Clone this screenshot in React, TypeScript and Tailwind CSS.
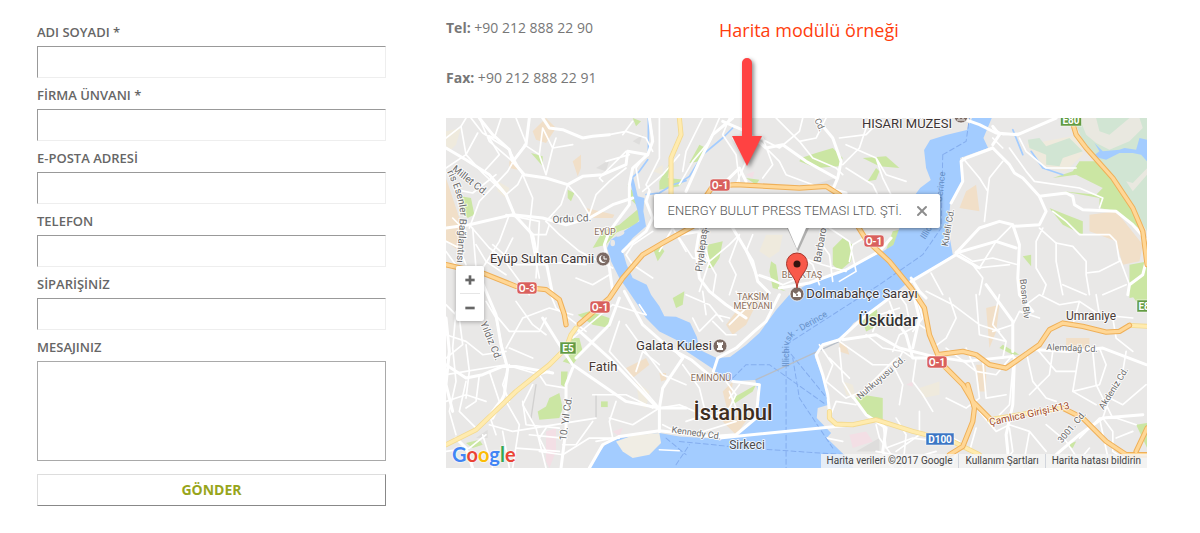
import { Minus, Plus, X } from 'lucide-react';
import type { ReactNode } from 'react';

const fields = [
  { id: 'name', label: 'ADI SOYADI *', type: 'text' },
  { id: 'company', label: 'FİRMA ÜNVANI *', type: 'text' },
  { id: 'email', label: 'E-POSTA ADRESİ', type: 'email' },
  { id: 'phone', label: 'TELEFON', type: 'tel' },
  { id: 'order', label: 'SİPARİŞİNİZ', type: 'text' },
];

const googleLetters = [
  ['G', '#4285f4'],
  ['o', '#ea4335'],
  ['o', '#fbbc05'],
  ['g', '#4285f4'],
  ['l', '#34a853'],
  ['e', '#ea4335'],
];

interface LabelProps {
  x: number;
  y: number;
  size?: number;
  rotate?: number;
  color?: string;
  bold?: boolean;
  children: ReactNode;
}

function MapLabel({ x, y, size = 10, rotate = 0, color = '#6b6b6b', bold, children }: LabelProps) {
  return (
    <text
      transform={`translate(${x} ${y}) rotate(${rotate})`}
      fontSize={size}
      fontWeight={bold ? 500 : 400}
      fill={color}
      stroke="#fff"
      strokeWidth={2}
      strokeOpacity={0.8}
      strokeLinejoin="round"
      textAnchor="middle"
      className="[paint-order:stroke]"
    >
      {children}
    </text>
  );
}

function Shield({ x, y, w, color, children }: { x: number; y: number; w: number; color: string; children: ReactNode }) {
  return (
    <g>
      <rect x={x - w / 2} y={y - 6} width={w} height={12} rx={color === '#d9605d' ? 3 : 0} fill={color} stroke="#fff" strokeOpacity={0.5} />
      <text x={x} y={y + 4} fontSize={10} fontWeight={700} fill="#fff" textAnchor="middle">{children}</text>
    </g>
  );
}

function Poi({ x, y, children }: { x: number; y: number; children: ReactNode }) {
  return (
    <g transform={`translate(${x} ${y})`}>
      <circle r={7} fill="#7b6a63" stroke="#fff" strokeOpacity={0.7} />
      {children}
    </g>
  );
}

// Small streets, drawn on a grid three times finer than the labels
const streets = [
  // north west
  'M60 0L45 25L0 60M75 0L110 45L190 95L205 125M100 0L130 70L200 130M165 0L145 60L110 45M210 0L240 75L205 125',
  'M205 125L185 160L100 250L70 330M95 45L60 110L0 150M45 25L60 110L110 165M130 60L160 110L110 165L180 230M150 170L80 225L30 215',
  'M235 80L280 110L300 170M290 30L280 110M320 90L300 170M380 80L320 90L290 30M330 60L320 90M205 125L230 170L215 200L180 230',
  'M230 170L260 240L250 330L280 480M365 200L345 260L300 310M365 200L400 240L430 290L420 310M430 290L450 230L490 190L540 150',
  'M300 310L340 350L400 400L500 450M70 320L130 390L170 420L250 530M190 290L160 370L110 450M180 290L280 310L270 480',
  'M90 380L120 430L180 470M80 330L90 450L110 470M200 360L170 420M140 380L210 440L300 440M310 320L300 350L260 350',
  'M490 50L540 40L600 60M530 50L560 10M600 60L620 100M610 0L620 60M640 0L640 120L600 200L610 215M700 110L650 170L590 220',
  'M540 100L460 180L470 190M550 110L480 130M600 110L570 150L580 210M620 340L560 380L540 410L560 440L620 480',
  'M0 370L40 390L60 440M0 400L50 470M20 300L60 340M390 480L440 500L490 470M260 430L420 440',
  // centre north
  'M820 0L790 70L740 130L700 200M850 0L830 50L870 110L880 190M860 60L900 130L870 200M770 0L720 100L710 160',
  'M960 90L1000 130L1020 170L1100 200M940 60L1000 90L1060 40L1070 0M950 60L980 140L950 180M990 0L1060 70L1110 60L1140 0M1060 70L1100 120L1170 150L1190 170',
  'M1190 140L1240 90L1270 0M1200 80L1290 120L1310 180L1340 240M1180 60L1260 50L1290 20M1290 120L1320 170L1380 190M1200 150L1280 200L1300 240',
  'M700 360L740 420L790 430L760 520M760 330L790 430L850 380L880 350M770 400L810 470L800 530M880 350L850 430L870 470L850 530',
  'M920 350L900 400L930 470L1010 500M1070 420L1130 440L1200 460M1120 370L1150 410L1160 490M1150 330L1210 370L1230 460L1180 490M1270 350L1220 380L1210 430',
  'M940 470L970 480L1010 500L1060 480M1060 410L1100 440L1120 500M700 290L680 330L720 400M620 300L680 330L640 400',
  // north east
  'M1550 120L1600 180L1625 220L1615 310M1670 130L1630 180L1625 220M1690 90L1740 160L1765 190L1900 210L1970 240L1960 270M1720 60L1740 100L1800 150L1890 150',
  'M1530 400L1580 430L1640 420L1715 440M1580 440L1610 480L1600 530M1455 465L1490 530M1790 330L1770 370L1770 450L1800 500L1790 530M1780 330L1830 375L1830 430L1850 530',
  'M1830 375L1880 385L1920 430L1920 470L1930 530M1920 465L1960 460L2020 430L2010 370L1990 350L1900 350L1860 310L1820 280M1970 530L2040 500M2020 420L2050 500',
  'M1700 320L1650 370L1600 450M1640 30L1670 50L1730 45M1640 60L1670 90M1590 450L1690 440M1850 500L1920 530',
  // south west
  'M0 560L40 600L50 680L0 720M0 650L60 670L110 710L180 700M120 550L150 600L180 740M30 580L20 690L30 790L10 880L30 950M0 770L180 740L280 770L310 760',
  'M60 790L40 880L90 930M100 770L90 850L60 870M130 760L160 850L130 890L150 950M180 690L230 600L310 570L380 590M210 550L260 620L300 650',
  'M140 580L190 640L280 640L300 600M180 850L220 920L200 1050M260 800L230 860L270 930L300 1050M130 920L200 940L450 900M110 950L140 1050M170 940L190 1050',
  'M280 770L300 800L360 810M0 1000L70 990L120 950M230 850L240 920L340 930M300 930L280 960L300 1000M440 910L390 980L350 980M440 830L540 830L620 870',
  'M380 660L500 560L600 590M520 610L490 700L580 800L640 870M540 620L590 690L650 770L720 800M510 850L490 910L500 960L450 970M640 870L560 920L490 900',
  'M640 870L700 860M650 920L710 950M570 760L590 700L640 740M280 1000L350 1010L430 960L520 960M210 990L340 1000M250 950L350 960',
  'M310 520L330 570L420 640M600 590L580 560M0 850L60 830L120 850M60 680L70 760L60 840M190 740L170 800L190 850M260 720L190 690',
  // centre south
  'M740 600L760 640L810 590L850 600M720 530L790 560L830 610M850 620L900 570L930 520M800 610L840 650L870 650M900 570L870 520M770 520L780 590',
  'M840 790L870 830L850 870L780 900M880 800L850 840M850 820L870 870M710 740L760 810L780 890L720 910M700 860L770 890L840 900M740 950L870 910',
  'M1120 680L1160 740L1140 790L1200 840M1180 670L1280 740L1350 740L1370 700M1180 690L1190 790L1220 840M1150 720L1210 780M1200 840L1250 820L1350 720',
  'M1230 860L1170 850L1150 900M1290 920L1300 960L1350 1030M1310 910L1320 990L1400 960L1480 970M1260 650L1310 690L1370 700L1400 720M1280 640L1300 590L1360 570',
  'M1340 740L1370 800L1360 860M1410 720L1400 790L1430 830L1460 880M1350 900L1380 950L1370 1050M1420 880L1420 950L1350 1000M1290 1000L1400 1020L1470 1000',
  'M1340 700L1360 650L1420 620L1450 640M1330 550L1360 630M1390 610L1380 560L1350 520',
  // south east
  'M1410 530L1430 600L1400 640M1510 540L1530 600L1500 660L1460 690M1440 520L1520 560L1600 620L1660 640M1590 530L1600 650L1680 670M1660 530L1640 620L1680 670L1670 720',
  'M1500 690L1540 720L1590 760L1650 770L1700 710M1560 690L1590 760L1600 840L1560 870L1500 840M1610 730L1620 840L1680 830M1700 750L1690 860L1660 890',
  'M1740 700L1760 790L1800 840L1830 850M1770 690L1830 760L1890 760L1900 700M1890 760L1880 820L1950 860M1820 700L1810 770L1750 830M1750 830L1790 790',
  'M1880 820L1960 800L1980 740L1960 690M1940 700L1950 800L2000 900M2040 700L2030 760L1990 840L1970 900M2100 800L2030 860L1990 840',
  'M1740 560L1780 530L1840 560L1900 550L1960 590L2060 600M1900 550L1880 620M1960 590L1950 530M2000 600L2010 660L2060 700M1780 600L1720 580L1700 620L1640 640',
  'M1600 880L1650 940L1690 920L1750 940L1800 1000M1590 930L1570 1000L1640 1050M1690 930L1700 1000L1660 1050M1750 940L1730 1050M1800 920L1860 970L1900 1030',
  'M1970 900L2000 940L2000 1000L2060 1040M1900 960L1960 900L2010 900L2070 920M1930 990L1880 1050M1960 900L1990 1040M1500 950L1540 970L1520 1040M2060 940L2010 960',
];

const avenues = [
  'M0 90L60 125L130 170L180 230L205 290L260 350L270 400L300 430L320 530',
  'M0 330L70 320L200 290L290 300L360 320L430 300L500 260L560 240',
  'M100 0L140 50L190 95L200 130L235 170L300 180L365 200L410 175L470 170L540 140L545 100L605 110',
  'M250 0L240 80L205 125M290 0L310 30L350 35L410 60L440 55L490 50M610 0L620 70L605 110L560 150L550 200L550 260L490 340L475 380L490 450L500 520',
  'M610 220L600 250L620 300L600 340L550 380L530 400',
  'M860 0L800 50L760 130L720 220M830 10L900 40L960 90L1010 80L1080 130L1170 180',
  'M1110 0L1160 60L1185 130L1175 180L1160 215L1200 225M860 330L920 430L935 490L970 525M830 200L880 150L900 190',
  'M1000 510L1090 495L1200 455L1300 400L1335 360',
  'M760 340L750 400L760 480L790 520L840 560L900 600M760 340L700 350',
  'M1545 0L1600 20L1650 45L1715 50L1830 0M1640 90L1690 140L1705 165L1730 180L1780 235L1860 225L1880 235L1885 260L1910 275L2010 280L2060 320L2100 365',
  'M1640 80L1660 50L1640 25M1640 90L1560 120L1545 130L1550 190L1515 255M1395 490L1530 410L1600 450M1530 405L1600 330L1660 310L1700 320L1720 380L1715 480L1720 530L1760 580',
  'M1530 405L1650 370L1710 390M1705 325L1780 320L1800 280L1780 235M2045 530L2050 500L2090 470L2100 430',
  'M90 450L150 590L165 680L185 750L175 830L140 900M0 740L60 780L110 770L170 745L210 745L320 765',
  'M290 600L340 680L380 740L540 850L640 870L720 870M390 630L490 720L630 865M390 720L490 620L520 540M380 750L360 800L360 930L345 1050',
  'M640 870L640 940M640 870L650 810L710 720M535 520L590 620L670 690L735 725L800 780',
  'M802 760L815 720L870 690L925 640L960 610L1000 530M710 720L690 700M430 1050L470 980L520 955L640 938L800 955L870 950L930 900L940 800L860 790',
  'M820 960L1200 922',
  'M1400 520L1420 600L1400 690M1180 665L1130 680L1110 710L1130 770L1145 830L1150 880M1220 835L1260 890L1320 930L1310 1000L1340 1050',
  'M1190 665L1290 650L1360 690L1460 715M1330 580L1380 650L1400 720L1460 720M1180 665L1250 600L1330 540',
  'M1460 715L1560 730L1700 715M1770 695L1870 700L1970 690L2100 740M1705 720L1700 860L1680 950L1690 1050M1620 500L1700 610L1700 700',
  'M1830 1010L1900 950L1970 900L2090 890',
  'M30 960L60 990L80 1050M0 600L10 700L0 800L20 880',
  'M1395 480L1420 520L1440 540',
];

const highways = [
  'M0 440L110 465L210 505L300 515L340 545L355 590L360 620',
  'M400 618L490 540L530 480L590 410L650 375L740 325L780 235L800 205L870 200L1060 210L1140 205L1180 230L1220 300L1260 365L1330 430L1395 510L1435 570L1450 650L1475 710',
  'M1875 0L1890 50L1920 90L2000 180L2060 270L2090 340L2103 440',
  'M1475 710L1550 700L1590 710L1630 740L1680 750L1730 715L1780 680L1810 635L1850 615L1910 625L1980 642L2020 640L2050 622',
  'M1475 725L1550 800L1580 850L1630 900M1565 800L1585 870L1580 910L1550 985L1510 1010M1850 870L1910 900L1980 970L2040 1010L2103 1010M2070 1000L2103 930',
];

const yellowRoads = [
  'M700 0L705 50L675 120L675 230',
  'M0 980L90 935L210 820L310 740L360 690L375 650L390 630',
  'M1150 880L1150 900L1170 918L1220 920L1290 905L1400 940L1520 970L1600 1010',
  'M2050 622L2103 625',
  'M1630 905L1780 880L1850 870',
];

const greens = [
  'M45 235L75 240L85 290L65 300L50 280Z',
  'M365 215L385 225L375 250L365 240Z',
  'M255 105L290 115L290 145Z',
  'M560 0L585 10L570 25Z',
  'M545 200L575 240L590 290L570 320L510 345L480 380L440 390L470 340L520 320L580 270L550 240Z',
  'M640 190L675 130L665 180L715 185L700 205L640 215Z',
  'M620 390L640 380L655 400L635 430Z',
  'M730 135L760 80L780 90L760 130Z',
  'M1065 120L1110 105L1160 90L1190 120L1180 145L1110 150L1060 130Z',
  'M1250 120L1320 115L1360 150L1300 145Z',
  'M1265 190L1290 150L1300 160L1290 185Z',
  'M1160 390L1190 360L1220 380L1215 430L1180 460L1160 440Z',
  'M785 380L830 370L820 420L800 450L785 450Z',
  'M975 430L990 440L1000 510L1020 520L980 510L970 460Z',
  'M1340 340L1360 335L1345 380L1320 395Z',
  'M900 180L940 185L930 200Z',
  'M1900 130L1950 130L2010 190L2080 300L2090 340L2010 280L1960 270L1960 240L1850 220L1950 230L1970 210L1890 170L1820 180L1880 160Z',
  'M1810 270L1860 290L1910 310L1910 350L1850 320Z',
  'M1730 415L1755 410L1755 445Z',
  'M2050 440L2103 430L2103 530L2050 540Z',
  'M2045 516L2103 516L2103 550L2070 550Z',
  'M395 590L430 580L490 600L490 630L440 620Z',
  'M370 660L400 660L410 700L380 740L350 730L380 700Z',
  'M345 760L365 760L360 810L345 800Z',
  'M275 880L300 865L310 840L340 825L350 870L340 900L280 905Z',
  'M465 850H485V867H465Z',
  'M60 975L100 965L110 980L80 990Z',
  'M585 560L610 580L600 600Z',
  'M680 540L715 520L710 560L690 570Z',
  'M860 840L930 800L920 820L860 860Z',
  'M1225 840L1250 830L1310 840L1310 910L1275 910Z',
  'M1250 610L1290 560L1300 620L1260 640Z',
  'M1660 690L1670 680L1720 710L1700 710Z',
  'M1860 980L1890 970L1880 990Z',
  'M2070 920L2103 915L2103 990Z',
];

const beiges = [
  'M0 40L45 30L30 80L10 100L0 80Z',
  'M260 40L300 0L330 30L300 75L270 65Z',
  'M190 130L210 130L215 155L190 150Z',
  'M155 190L190 210L180 240L155 220Z',
  'M380 130L405 110L405 150L395 175Z',
  'M0 180L20 240L50 330L40 400L0 370Z',
  'M620 160L650 140L650 170Z',
  'M540 750L600 720L610 740L560 780Z',
  'M640 765L660 765L660 785L645 790Z',
  'M570 790L610 820L600 870L580 860Z',
  'M840 620L900 540L950 520L900 620L860 650Z',
  'M860 790L830 820L850 900L830 910L870 950L920 880L850 900Z',
  'M960 350L1010 350L1000 400L970 420L940 400Z',
  'M1180 670L1200 680L1210 710L1180 700Z',
  'M1560 220L1590 200L1600 280L1540 270Z',
  'M1740 80L1900 50L1910 110L1860 160L1800 150Z',
  'M1930 290L2010 280L2090 380L2080 430L2030 440L2010 370L1930 340Z',
  'M1620 570L1660 560L1650 640L1630 690Z',
  'M1420 810L1480 790L1480 830L1430 840Z',
  'M1590 740L1620 740L1620 820L1600 820Z',
  'M1860 660L1930 660L1930 700L1860 690Z',
  'M1190 790L1220 800L1230 840L1200 830Z',
  'M420 270L505 290L500 300L430 300Z',
];

function MapArtwork() {
  return (
    <svg viewBox="0 0 701 350" preserveAspectRatio="xMidYMid slice" className="h-full w-full font-[Roboto,sans-serif]" role="img" aria-label="İstanbul haritası">
      <defs>
        <path id="ferry-south" d="M343 249V226Q344 220 352 215L396 190" />
        <path id="ferry-north" d="M479 122Q494 100 497 75L501 38" />
        <path id="esenler" d="M1 54Q14 80 14 98L10 156" />
      </defs>
      <rect width={701} height={350} fill="#e9e8e7" />
      <g transform="scale(0.3334)" fill="none" strokeLinecap="round" strokeLinejoin="round">
        {beiges.map((d, i) => <path key={i} d={d} fill={i % 3 === 0 ? '#efeadd' : '#f1dfc8'} />)}
        <path
          fill="#d1e5d3"
          d="M1880 0H2103V340L2060 270L2000 180L1920 90ZM1745 65L1780 60L1800 85L1870 60L1910 100L1850 120L1840 145L1800 140L1800 110L1750 90Z"
        />
        <path fill="#e9e8e0" d="M1900 0H1950L1960 40L1990 50L2050 0H2080L2090 30L2050 70L1990 95L1950 75L1920 50ZM2040 190L2060 195L2103 150V170L2060 220Z" />
        <path fill="#dedddc" d="M450 150L490 125L480 160ZM560 70L590 50L580 80ZM1100 200L1170 180L1160 200ZM1230 1000L1300 960L1300 1000ZM90 960L125 935L125 960Z" />
        {greens.map((d) => <path key={d} d={d} fill="#cbe6a3" />)}
        <path fill="#f3dfe5" d="M300 940L330 930L330 1000L310 1050L300 1030ZM500 940L530 930L520 955ZM1210 950L1260 940L1280 970L1220 990ZM1380 800L1400 790L1400 805ZM900 170L925 160L920 180Z" />

        <g fill="#a3ccff">
          {/* Golden Horn, Bosphorus and Marmara */}
          <path d="M1578 0L1562 36L1500 51L1452 66L1434 96L1440 150L1454 186L1422 210L1400 240L1360 330L1342 381L1302 405L1222 441L1152 471L1080 501L1030 530L990 576L940 645L900 681L852 717L812 720L762 696L752 656L732 614L690 596L655 595L640 565L615 530L602 500L560 480L542 440L530 400L560 360L600 325L592 280L595 240L575 235L562 180L552 185L562 235L575 280L580 310L540 335L495 365L483 390L495 430L520 480L545 516L575 560L600 600L640 640L690 665L722 700L800 752L832 790L928 786L940 846L918 906L868 950L812 962L700 955L640 945L520 960L480 976L450 1016L430 1050H1222L1190 1006L1142 960L1155 945L1112 900L1115 870L1148 860L1144 806L1122 756L1106 716L1132 680L1182 666L1222 616L1322 546L1390 490L1452 456L1520 410L1506 330L1512 260L1547 200L1542 120L1626 90L1612 60L1637 0Z" />
          <path d="M1945 75L1960 90L1970 100L2020 95L2035 90L2070 95L2080 60L2103 65V130L2085 110L2060 105L2020 105L1980 125L1940 115L1960 100Z" />
        </g>
        <path d="M510 970L560 952L640 945L645 975L610 1010L560 1020L530 1000Z" fill="#f0ede4" />
        <ellipse cx={522} cy={347} rx={14} ry={7} fill="#e9e8e7" transform="rotate(-25 522 347)" />
        <ellipse cx={500} cy={375} rx={7} ry={10} fill="#e9e8e7" />
        <path d="M1142 960L1190 970M640 995L700 998" stroke="#fff" strokeWidth={5} />
        <path d="M555 182L580 160L605 125M607 100V0M600 230L640 225L680 200L720 188M700 195L730 175L770 110L830 60L860 30M1700 35L1730 110M1755 100L1790 150L1850 170" stroke="#a3ccff" strokeWidth={5} />
        <g stroke="#84adee" strokeWidth={3} strokeDasharray="15 9">
          <path d="M1490 110L1560 70L1570 0M1490 110L1485 330L1430 410L1300 500L1020 680V1050M1020 690L1110 800L1150 850M860 780L900 740L970 740L1140 860M1040 720L1060 840L1160 990M700 970L900 990L1200 1010M660 960L720 1010M690 1040L730 980" />
        </g>
        <path d="M930 785L1180 670" stroke="#b7bec8" strokeWidth={4} />
        <path d="M270 800L255 900M450 830V900" stroke="#d2d1d0" strokeWidth={4} />

        <g stroke="#fff" strokeWidth={5}>{streets.map((d) => <path key={d} d={d} />)}</g>
        <g stroke="#fff" strokeWidth={9}>{avenues.map((d) => <path key={d} d={d} />)}</g>

        <g stroke="#f4da8f" strokeWidth={15}>{yellowRoads.map((d) => <path key={d} d={d} />)}</g>
        <g stroke="#ffebaf" strokeWidth={10}>{yellowRoads.map((d) => <path key={d} d={d} />)}</g>
        <g stroke="#efb059" strokeWidth={16}>{highways.map((d) => <path key={d} d={d} />)}</g>
        <g stroke="#ffd796" strokeWidth={10}>{highways.map((d) => <path key={d} d={d} />)}</g>
      </g>

      <MapLabel x={22} y={65} rotate={38}>Millet Cd.</MapLabel>
      <text fontSize={10} fill="#6b6b6b" stroke="#fff" strokeWidth={2} strokeOpacity={0.8} className="[paint-order:stroke]">
        <textPath href="#esenler">ris Esenler Bağlantısı</textPath>
      </text>
      <MapLabel x={126} y={104} rotate={-3}>Ordu Cd.</MapLabel>
      <MapLabel x={159} y={117} size={9} color="#8a6f5c">EYÜP</MapLabel>
      <MapLabel x={96} y={145} size={13} color="#3d3535">Eyüp Sultan Camii</MapLabel>
      <MapLabel x={461} y={10} size={13} color="#3d3535">HISARI MÜZESİ</MapLabel>
      <MapLabel x={371} y={8} size={9} rotate={65}>Cd.</MapLabel>
      <MapLabel x={259} y={130} rotate={-83}>Piyalepaşa</MapLabel>
      <MapLabel x={378} y={125} rotate={-80}>Barbaros</MapLabel>
      <MapLabel x={356} y={160} size={9} color="#8a6f5c">BEŞİKTAŞ</MapLabel>
      <MapLabel x={307} y={182} size={9} color="#8a6f5c">TAKSİM</MapLabel>
      <MapLabel x={307} y={191} size={9} color="#8a6f5c">MEYDANI</MapLabel>
      <MapLabel x={416} y={180} size={13} color="#3d3535">Dolmabahçe Sarayı</MapLabel>
      <MapLabel x={442} y={208} size={16} color="#333" bold>Üsküdar</MapLabel>
      <MapLabel x={645} y={202} size={12} color="#4a3b35">Umraniye</MapLabel>
      <MapLabel x={228} y={232} size={13} color="#3d3535">Galata Kulesi</MapLabel>
      <MapLabel x={157} y={253} size={13} color="#4a3b35">Fatih</MapLabel>
      <MapLabel x={265} y={263} size={9} color="#8a6f5c">EMİNÖNÜ</MapLabel>
      <MapLabel x={287} y={302} size={22} color="#3d2e1f" bold>İstanbul</MapLabel>
      <MapLabel x={301} y={331} size={12} color="#4a4a4a">Sirkeci</MapLabel>
      <MapLabel x={250} y={318} size={9} rotate={8}>Kennedy Cd.</MapLabel>
      <MapLabel x={42} y={224} size={10} rotate={68}>Yıldız Cd.</MapLabel>
      <MapLabel x={123} y={301} size={10} rotate={-82}>10. Yıl Cd.</MapLabel>
      <MapLabel x={505} y={110} size={9} rotate={-80}>Kuleli Cd.</MapLabel>
      <MapLabel x={576} y={181} size={9} rotate={84}>Bosna Blv</MapLabel>
      <MapLabel x={626} y={233} size={9} rotate={2}>Alemdağ Cd.</MapLabel>
      <MapLabel x={670} y={272} size={9} rotate={-58}>Akdeniz Cd.</MapLabel>
      <MapLabel x={628} y={311} size={9} rotate={-50}>3001. Cd.</MapLabel>
      <MapLabel x={437} y={262} size={9} rotate={-41}>Nuhkuyusu Cd.</MapLabel>
      <MapLabel x={584} y={299} size={10} rotate={-12} color="#a14b2b">Çamlıca Girişi-K13</MapLabel>
      <g fill="#6690c8" fontSize={9}>
        <text><textPath href="#ferry-south">Illichivsk - Derince</textPath></text>
        <text><textPath href="#ferry-north">Illichivsk - Derince</textPath></text>
      </g>

      <Shield x={81} y={170} w={20} color="#d9605d">O-3</Shield>
      <Shield x={154} y={189} w={20} color="#d9605d">O-1</Shield>
      <Shield x={274} y={67} w={20} color="#d9605d">O-1</Shield>
      <Shield x={428} y={123} w={20} color="#d9605d">O-1</Shield>
      <Shield x={491} y={244} w={20} color="#d9605d">O-1</Shield>
      <Shield x={122} y={230} w={16} color="#639b42">E5</Shield>
      <Shield x={625} y={2} w={21} color="#639b42">E80</Shield>
      <Shield x={701} y={188} w={20} color="#639b42">E80</Shield>
      <Shield x={494} y={321} w={28} color="#3c76c4">D100</Shield>

      <Poi x={157} y={141}>
        <path d="M3 2.500A4 4 0 1 1 0 -4A3 3 0 1 0 3 2.500Z" fill="#fff" />
        <path d="M1 -3v3h3" stroke="#fff" fill="none" />
      </Poi>
      <Poi x={515} y={-2}>
        <path d="M-4 4h8M-2 3v-4M2 3v-4" stroke="#fff" fill="none" />
      </Poi>
      <Poi x={351} y={176}>
        <path d="M-4 -2l3 2l3 -3l2 2v4h-8z" fill="#fff" />
        <circle cy={1} r={1} fill="#7b6a63" />
      </Poi>
      <Poi x={274} y={228}>
        <path d="M-3 -4h1.500v1h1v-1h1v1h1v-1h1.500v3h-1v3h1v2h-6v-2h1v-3h-1z" fill="#fff" />
      </Poi>
    </svg>
  );
}

function InfoWindow() {
  return (
    <div className="absolute left-1/2 top-[76px] -translate-x-1/2">
      <div className="flex h-[34px] w-[286px] items-center justify-between rounded-xs bg-white pl-3.5 pr-2.5 font-[Roboto,sans-serif] text-[13px] font-light text-[#555] shadow-[0_1px_4px_rgba(0,0,0,0.5)]">
        <span className="whitespace-nowrap">ENERGY BULUT PRESS TEMASI LTD. ŞTİ.</span>
        <button type="button" aria-label="Kapat">
          <X size={16} strokeWidth={3} color="#8c8c8c" />
        </button>
      </div>
      <svg width={40} height={72} viewBox="0 0 40 72" className="mx-auto block" aria-hidden="true">
        <path d="M9 0L20 24L31 0" fill="#777" opacity={0.5} transform="translate(1 0)" />
        <path d="M11 0L20 21L29 0Z" fill="#fff" />
        <path d="M20 60C19 48 9.500 44 9.500 35.500A10.500 10.500 0 0 1 30.500 35.500C30.500 44 21 48 20 60Z" fill="#f8594a" stroke="#a8352b" />
        <circle cx={20} cy={36} r={3.500} fill="#33150f" />
      </svg>
    </div>
  );
}

export default function App() {
  return (
    <main className="grid grid-cols-[349fr_701fr] gap-[60px] bg-white pl-[37px] pr-[53px] font-['Open_Sans',sans-serif] text-[#777]">
      <form className="pt-[22px]" onSubmit={(e) => e.preventDefault()}>
        {fields.map((field) => (
          <div key={field.id} className="mb-[7px]">
            <label htmlFor={field.id} className="mb-1 block text-[13px] font-semibold leading-5 text-[#666]">
              {field.label}
            </label>
            <input
              id={field.id}
              type={field.type}
              className="block h-8 w-full border border-b-[#eee] border-l-[#999] border-r-[#eee] border-t-[#999] px-2 text-sm outline-none"
            />
          </div>
        ))}
        <label htmlFor="message" className="mb-1 block text-[13px] font-semibold leading-5 text-[#666]">
          MESAJINIZ
        </label>
        <textarea id="message" className="block h-[100px] w-full resize-none border border-[#a9a9a9] p-2 text-sm outline-none" />
        <button
          type="submit"
          className="mt-[13px] h-8 w-full border border-b-[#888] border-l-[#ddd] border-r-[#888] border-t-[#ddd] text-sm font-bold text-[#97a51b]"
        >
          GÖNDER
        </button>
      </form>

      <section className="relative min-w-0 text-sm">
        <p className="mt-4 leading-6"><strong>Tel:</strong> +90 212 888 22 90</p>
        <p className="mt-[26px] leading-6"><strong>Fax:</strong> +90 212 888 22 91</p>

        <div className="relative mt-7 h-[350px] overflow-hidden">
          <MapArtwork />
          <InfoWindow />

          <div className="absolute left-2.5 top-[148px] flex w-7 flex-col items-center rounded-xs bg-white shadow-[0_1px_4px_rgba(0,0,0,0.3)]">
            <button type="button" aria-label="Yakınlaştır" className="flex h-[27px] w-full items-center justify-center">
              <Plus size={16} strokeWidth={4} strokeLinecap="butt" color="#666" />
            </button>
            <span className="h-px w-5 bg-[#e6e6e6]" />
            <button type="button" aria-label="Uzaklaştır" className="flex h-[27px] w-full items-center justify-center">
              <Minus size={16} strokeWidth={4} strokeLinecap="butt" color="#666" />
            </button>
          </div>

          <a
            href="#google"
            className="absolute bottom-0 left-1.5 font-[Lato,sans-serif] text-[20px] font-bold leading-7 [text-shadow:0_0_2px_#fff,0_0_2px_#fff]"
          >
            {googleLetters.map(([letter, color], i) => (
              <span key={i} style={{ color }}>{letter}</span>
            ))}
          </a>

          <div className="absolute bottom-0 right-0 flex h-3.5 items-center divide-x divide-gray-300 bg-[#f5f5f5]/80 font-[Roboto,sans-serif] text-[10px] text-[#444]">
            <span className="px-1.5">Harita verileri ©2017 Google</span>
            <a href="#terms" className="px-1.5">Kullanım Şartları</a>
            <a href="#report" className="px-1.5">Harita hatası bildirin</a>
          </div>
        </div>

        {/* Callout pointing at the map */}
        <div className="absolute left-[273px] top-[18px] text-[#ff3d0d]">
          <p className="whitespace-nowrap text-lg leading-6">Harita modülü örneği</p>
          <svg width={40} height={118} viewBox="0 0 40 118" className="ml-2 mt-3.5 drop-shadow-[2px_2px_2px_rgba(0,0,0,0.45)]" aria-hidden="true">
            <path d="M15 7a5 5 0 0 1 10 0V80H35L20 110L5 80H15Z" fill="#ff4242" />
          </svg>
        </div>
      </section>
    </main>
  );
}
